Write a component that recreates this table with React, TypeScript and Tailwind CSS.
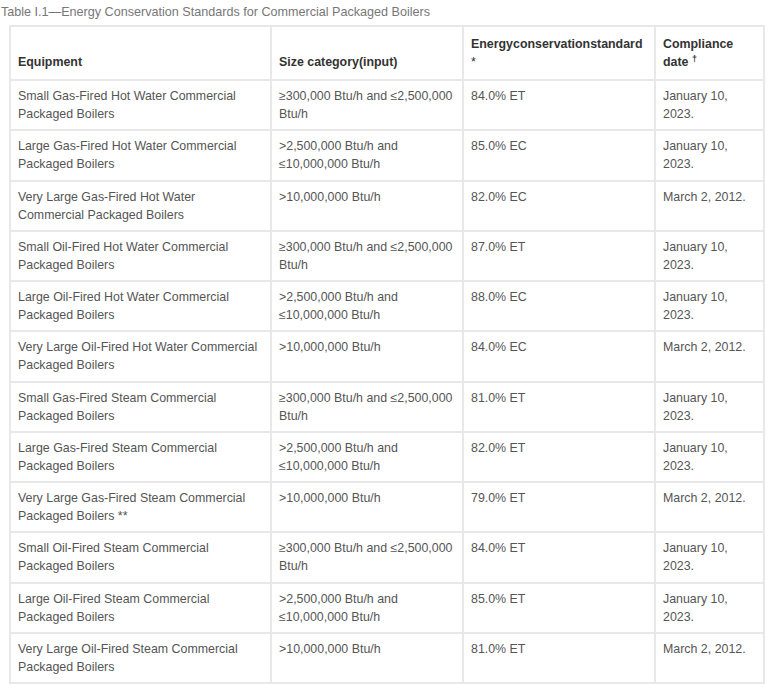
const rows: [string, string, string, string][] = [
  ['Small Gas-Fired Hot Water Commercial Packaged Boilers', '≥300,000 Btu/h and ≤2,500,000 Btu/h', '84.0% ET', 'January 10, 2023.'],
  ['Large Gas-Fired Hot Water Commercial Packaged Boilers', '>2,500,000 Btu/h and ≤10,000,000 Btu/h', '85.0% EC', 'January 10, 2023.'],
  ['Very Large Gas-Fired Hot Water Commercial Packaged Boilers', '>10,000,000 Btu/h', '82.0% EC', 'March 2, 2012.'],
  ['Small Oil-Fired Hot Water Commercial Packaged Boilers', '≥300,000 Btu/h and ≤2,500,000 Btu/h', '87.0% ET', 'January 10, 2023.'],
  ['Large Oil-Fired Hot Water Commercial Packaged Boilers', '>2,500,000 Btu/h and ≤10,000,000 Btu/h', '88.0% EC', 'January 10, 2023.'],
  ['Very Large Oil-Fired Hot Water Commercial Packaged Boilers', '>10,000,000 Btu/h', '84.0% EC', 'March 2, 2012.'],
  ['Small Gas-Fired Steam Commercial Packaged Boilers', '≥300,000 Btu/h and ≤2,500,000 Btu/h', '81.0% ET', 'January 10, 2023.'],
  ['Large Gas-Fired Steam Commercial Packaged Boilers', '>2,500,000 Btu/h and ≤10,000,000 Btu/h', '82.0% ET', 'January 10, 2023.'],
  ['Very Large Gas-Fired Steam Commercial Packaged Boilers **', '>10,000,000 Btu/h', '79.0% ET', 'March 2, 2012.'],
  ['Small Oil-Fired Steam Commercial Packaged Boilers', '≥300,000 Btu/h and ≤2,500,000 Btu/h', '84.0% ET', 'January 10, 2023.'],
  ['Large Oil-Fired Steam Commercial Packaged Boilers', '>2,500,000 Btu/h and ≤10,000,000 Btu/h', '85.0% ET', 'January 10, 2023.'],
  ['Very Large Oil-Fired Steam Commercial Packaged Boilers', '>10,000,000 Btu/h', '81.0% ET', 'March 2, 2012.'],
]

const th = 'border-2 border-[#e8e8e8] px-[7px] pt-[6px] pb-[8px] text-left align-bottom font-bold text-[#333]'
const td = 'border-2 border-[#e8e8e8] px-[7px] pt-[6px] pb-[6px] align-top'

export default function App() {
  return (
    <div className="bg-white min-h-[689px] pl-[1px] pt-[3px] text-[12.4px] leading-[18px] text-[#555] font-['Liberation_Sans',Arial,sans-serif]">
      <div className="text-[#777] text-[12.6px] h-[18px]">Table I.1—Energy Conservation Standards for Commercial Packaged Boilers</div>
      <table className="ml-[8px] mt-[4px] w-[754px] table-fixed border-collapse">
        <colgroup>
          <col className="w-[261px]" />
          <col className="w-[192px]" />
          <col className="w-[192px]" />
          <col className="w-[109px]" />
        </colgroup>
        <thead>
          <tr className="h-[54px]">
            <th className={th}>Equipment</th>
            <th className={th}>Size category(input)</th>
            <th className={th}>Energyconservationstandard <span className="font-normal">*</span></th>
            <th className={th}>Compliance date <sup className="text-[9px] leading-none">†</sup></th>
          </tr>
        </thead>
        <tbody>
          {rows.map((r, i) => (
            <tr key={i} className="h-[50.25px]">
              <td className={td}>{r[0]}</td>
              <td className={td}>{r[1]}</td>
              <td className={td}>{r[2]}</td>
              <td className={td}>{r[3]}</td>
            </tr>
          ))}
        </tbody>
      </table>
    </div>
  )
}
